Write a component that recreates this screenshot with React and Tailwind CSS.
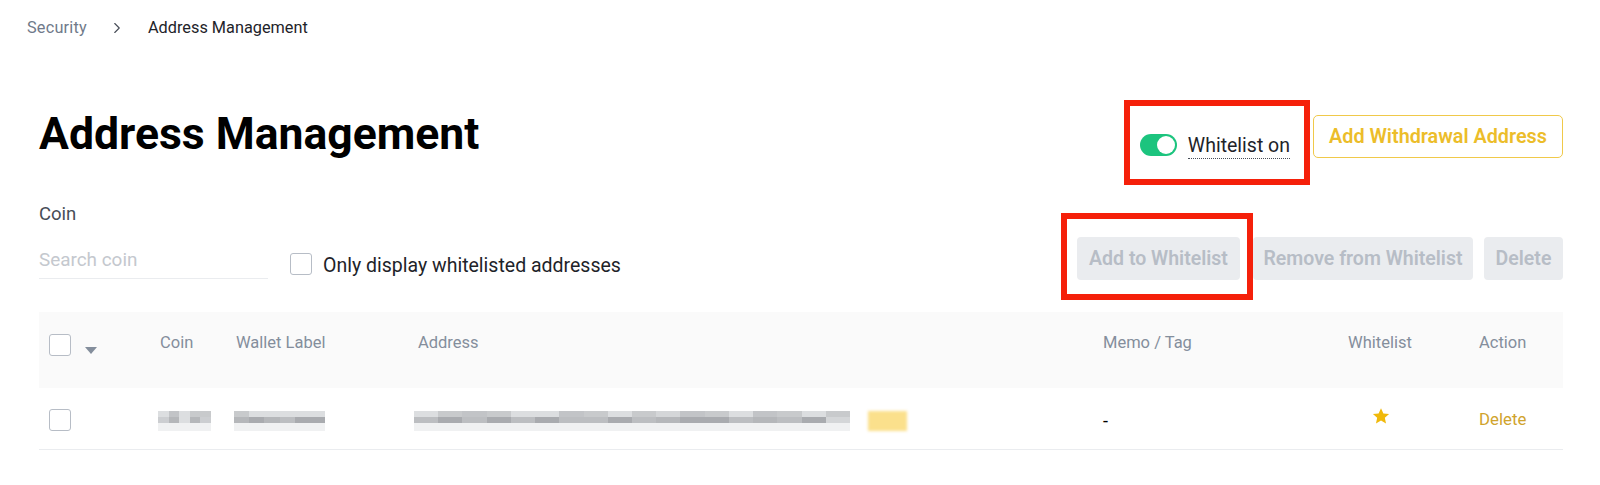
import React from 'react';
import { ChevronRight } from 'lucide-react';

const GREYS = ['#d4d6d8', '#c8cacc', '#c2c4c7', '#dcdee0', '#ccced1', '#b5b7ba', '#a9abaf', '#bcbec1'];

// pixelated placeholder for the redacted cells
function Mosaic({ top, bottom, className }) {
  return (
    <div className={`flex flex-col blur-[0.6px] ${className}`}>
      <div className="flex flex-1">
        {top.map((g, i) => (
          <div key={i} className="flex-1" style={{ backgroundColor: GREYS[g] }} />
        ))}
      </div>
      <div className="flex flex-1">
        {bottom.map((g, i) => (
          <div key={i} className="flex-1" style={{ backgroundColor: GREYS[g] }} />
        ))}
      </div>
      <div className="h-[8px] bg-[#f0f1f2]" />
    </div>
  );
}

function Checkbox() {
  return <div className="w-[22px] h-[22px] rounded-[3px] border border-[#b7bdc6] bg-white shrink-0" />;
}

function DisabledButton({ children, className }) {
  return (
    <button className={`h-[43px] rounded-[4px] bg-[#eaecef] text-[#b7bdc6] text-[19.5px] font-semibold ${className}`}>
      {children}
    </button>
  );
}

export default function App() {
  return (
    <div className="relative w-[1600px] h-[485px] overflow-hidden bg-white pl-[39px] pr-[37px] text-[#1e2329] font-['Roboto',sans-serif]">
      {/* Breadcrumb */}
      <div className="h-[54px] pt-[2px] -ml-[12px] flex items-center text-[16.3px]">
        <span className="text-[#707a8a] w-[81px] tracking-[0.2px]">Security</span>
        <ChevronRight className="w-[18px] h-[18px] text-[#474d57] mr-[22px]" strokeWidth={1.5} />
        <span>Address Management</span>
      </div>

      {/* Title row */}
      <div className="mt-[61px] flex justify-between items-start h-[43px]">
        <h1 className="text-[44.5px] leading-[54px] font-bold -mt-[8px] text-black">Address Management</h1>
        <div className="flex items-start">
          <div className="flex items-start mt-[18px] mr-[23px]">
            <div className="w-[37px] h-[22px] mt-[1px] rounded-full bg-[#1cc47e] flex items-center justify-end pr-[2px]">
              <div className="w-[18px] h-[18px] rounded-full bg-white" />
            </div>
            <span className="ml-[11px] pt-[1px] text-[19.5px] leading-[24px] border-b border-dotted border-[#474d57]">Whitelist on</span>
          </div>
          <button className="w-[250px] h-[43px] pt-[1px] rounded-[5px] border border-[#f0c94a] text-[#ecbd2a] text-[19.8px] font-semibold">
            Add Withdrawal Address
          </button>
        </div>
      </div>

      {/* Filters and bulk actions */}
      <div className="mt-[45px] flex justify-between items-end">
        <div className="flex items-end pb-[1px]">
          <div className="w-[229px]">
            <div className="h-[22px] leading-[22px] text-[18.5px] text-[#474d57]">Coin</div>
            <div className="mt-[23px] h-[31px] border-b border-[#eaecef] text-[18.9px] leading-[24px] text-[#c4c8ce]">Search coin</div>
          </div>
          <div className="ml-[22px] mb-[1px] flex items-start">
            <Checkbox />
            <span className="ml-[11px] pt-[1px] text-[19.5px] leading-[24px] text-[#1e2329]">Only display whitelisted addresses</span>
          </div>
        </div>
        <div className="flex">
          <DisabledButton className="w-[163px]">Add to Whitelist</DisabledButton>
          <DisabledButton className="ml-[13px] w-[220px]">Remove from Whitelist</DisabledButton>
          <DisabledButton className="ml-[11px] w-[79px]">Delete</DisabledButton>
        </div>
      </div>

      {/* Table */}
      <div className="mt-[32px] text-[16.5px]">
        <div className="h-[76px] bg-[#fafafa] grid grid-cols-[121px_76px_182px_685px_245px_131px_84px] text-[#848e9c] leading-[62px]">
          <div className="flex pl-[10px] pt-[22px]">
            <Checkbox />
            <svg className="ml-[14px] mt-[13px]" width="12" height="7" viewBox="0 0 12 7">
              <path d="M0 0h12L6 7z" fill="#848e9c" />
            </svg>
          </div>
          <div>Coin</div>
          <div>Wallet Label</div>
          <div>Address</div>
          <div>Memo / Tag</div>
          <div>Whitelist</div>
          <div>Action</div>
        </div>
        <div className="h-[62px] border-b border-[#eaecef] grid grid-cols-[121px_76px_182px_685px_245px_131px_84px] items-center">
          <div className="pl-[10px] mt-[3px]">
            <Checkbox />
          </div>
          <Mosaic className="w-[53px] h-[20px] -ml-[2px] mt-[4px]" top={[3, 2, 3, 1, 1]} bottom={[4, 5, 3, 5, 4]} />
          <Mosaic className="w-[91px] h-[20px] -ml-[2px] mt-[4px]" top={[1, 3, 3, 3, 3, 3]} bottom={[5, 6, 5, 7, 6, 6]} />
          <div className="flex -ml-[4px] mt-[4px]">
            <Mosaic
              className="w-[436px] h-[20px]"
              top={[3, 1, 2, 1, 3, 3, 2, 1, 3, 1, 0, 2, 1, 3, 2, 1, 3, 1]}
              bottom={[7, 6, 7, 6, 7, 6, 7, 7, 6, 7, 5, 6, 6, 7, 5, 7, 6, 0]}
            />
            <div className="ml-[18px] w-[39px] h-[20px] bg-[#fbe08c] blur-[1.5px]" />
          </div>
          <div className="text-black text-[18px] mt-[3px]">-</div>
          <div className="pl-[24px] -mt-[6px]">
            <svg width="18" height="18" viewBox="0 0 24 24">
              <path d="M12 1.5l3.2 7 7.6.8-5.7 5.1 1.6 7.5-6.7-3.9-6.7 3.9 1.6-7.5L1.2 9.3l7.6-.8z" fill="#f0b90b" />
            </svg>
          </div>
          <div className="text-[#d0a32d] text-[16.8px] mt-[3px]">Delete</div>
        </div>
      </div>

      {/* Red annotation boxes */}
      <div className="absolute left-[1124px] top-[100px] w-[186px] h-[85px] border-[6px] border-[#f5200a]" />
      <div className="absolute left-[1061px] top-[213px] w-[192px] h-[87px] border-[6px] border-[#f5200a]" />
    </div>
  );
}
